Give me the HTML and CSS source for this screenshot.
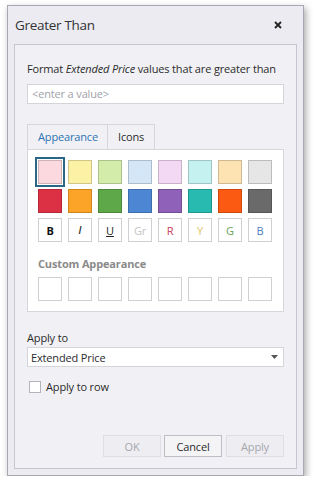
FILE: index.html
```html
<!DOCTYPE html>
<html lang="en">

<head>
    <meta charset="UTF-8">
    <meta name="viewport" content="width=device-width, initial-scale=1.0">
    <title>Greater Than</title>
    <link rel="stylesheet" href="styles.css">
</head>

<body>
    <div class="dialog">
        <div class="title-bar">
            <span class="title">Greater Than</span>
            <svg class="close" width="8" height="8" viewBox="0 0 8 8">
                <path d="M1 1 L7 7 M7 1 L1 7" stroke="#222" stroke-width="1.8" />
            </svg>
        </div>
        <div class="content">
            <p class="intro">Format <em>Extended Price</em> values that are greater than</p>
            <div class="input">&lt;enter a value&gt;</div>

            <div class="tabs">
                <div class="tab active">Appearance</div>
                <div class="tab">Icons</div>
            </div>
            <div class="tab-panel">
                <div class="swatches">
                    <div class="swatch selected" style="background:#fcd9df"></div>
                    <div class="swatch" style="background:#fdf1a6"></div>
                    <div class="swatch" style="background:#d4ecaa"></div>
                    <div class="swatch" style="background:#d3e7f9"></div>
                    <div class="swatch" style="background:#f3d9f4"></div>
                    <div class="swatch" style="background:#c5f1f1"></div>
                    <div class="swatch" style="background:#fde2b2"></div>
                    <div class="swatch" style="background:#e6e6e6"></div>

                    <div class="swatch" style="background:#dc3145"></div>
                    <div class="swatch" style="background:#fca428"></div>
                    <div class="swatch" style="background:#5ea84a"></div>
                    <div class="swatch" style="background:#4d87d3"></div>
                    <div class="swatch" style="background:#8f61b8"></div>
                    <div class="swatch" style="background:#28b9b1"></div>
                    <div class="swatch" style="background:#fb5a12"></div>
                    <div class="swatch" style="background:#6a6a6a"></div>

                    <div class="cell bold">B</div>
                    <div class="cell italic">I</div>
                    <div class="cell under">U</div>
                    <div class="cell grey">Gr</div>
                    <div class="cell red">R</div>
                    <div class="cell yellow">Y</div>
                    <div class="cell green">G</div>
                    <div class="cell blue">B</div>
                </div>

                <div class="custom-label">Custom Appearance</div>
                <div class="swatches">
                    <div class="cell"></div>
                    <div class="cell"></div>
                    <div class="cell"></div>
                    <div class="cell"></div>
                    <div class="cell"></div>
                    <div class="cell"></div>
                    <div class="cell"></div>
                    <div class="cell"></div>
                </div>
            </div>

            <div class="apply-label">Apply to</div>
            <div class="select">
                <span>Extended Price</span>
                <svg width="7" height="4" viewBox="0 0 7 4">
                    <path d="M0 0 H7 L3.5 4 Z" fill="#555" />
                </svg>
            </div>

            <label class="check-row">
                <span class="checkbox"></span>
                Apply to row
            </label>

            <div class="buttons">
                <button class="btn disabled">OK</button>
                <button class="btn">Cancel</button>
                <button class="btn disabled">Apply</button>
            </div>
        </div>
    </div>
</body>

</html>
```

FILE: styles.css
```css
:root {
    --window-bg: #ebebf1;
    --panel-bg: #f1f1f5;
    --border: #c6c6cf;
    --text-color: #2b2b2b;
    --font-family: 'Open Sans', 'Noto Sans', sans-serif;
}

body {
    margin: 0;
    padding: 0;
    background: #ffffff;
    font-family: var(--font-family);
    color: var(--text-color);
}

.dialog {
    box-sizing: border-box;
    margin: 5px 0 0 7px;
    width: 297px;
    height: 471px;
    border: 1px solid #a8a8b4;
    background: var(--window-bg);
    box-shadow: 2px 3px 7px rgba(0, 0, 0, 0.35);
    display: flex;
    flex-direction: column;
}

.title-bar {
    height: 38px;
    display: flex;
    align-items: center;
    justify-content: space-between;
    padding: 0 21px 0 7px;
    flex-shrink: 0;
}

.title {
    font-size: 13.5px;
    letter-spacing: -0.3px;
    color: #333;
    margin-top: -1px;
}

.close {
    margin-top: -1px;
}

.content {
    flex: 1;
    margin: 0 6px 6px 6px;
    border: 1px solid var(--border);
    background: var(--panel-bg);
    padding: 17px 12px 11px 12px;
    display: flex;
    flex-direction: column;
    font-size: 11px;
    letter-spacing: -0.15px;
}

.intro {
    margin: 0;
    line-height: 14px;
    white-space: nowrap;
}

.input {
    box-sizing: border-box;
    margin-top: 8px;
    height: 20px;
    border: 1px solid #d4d4da;
    background: #ffffff;
    color: #a2a2a8;
    padding: 0 4px;
    line-height: 18px;
}

.tabs {
    display: flex;
    margin-top: 20px;
    height: 25px;
}

.tab {
    box-sizing: border-box;
    border: 1px solid #d6d6dd;
    border-bottom: none;
    padding: 0 10px;
    line-height: 24px;
}

.tab + .tab {
    border-left: none;
}

.tab.active {
    width: 81px;
    color: #2c73b3;
    text-align: center;
}

.tab-panel {
    box-sizing: border-box;
    height: 163px;
    border: 1px solid #d6d6dd;
    background: #ffffff;
    padding: 10px 10px;
}

.swatches {
    display: grid;
    grid-template-columns: repeat(8, 24px);
    grid-auto-rows: 24px;
    column-gap: 6px;
    row-gap: 5px;
}

.swatch {
    box-sizing: border-box;
    border: 1px solid rgba(0, 0, 0, 0.18);
}

.swatch.selected {
    outline: 2px solid #2b6784;
    outline-offset: 1px;
}

.cell {
    box-sizing: border-box;
    border: 1px solid #cfcfd4;
    background: #ffffff;
    display: flex;
    align-items: center;
    justify-content: center;
    font-size: 11px;
}

.cell.bold {
    font-weight: bold;
    color: #111;
}

.cell.italic {
    font-style: italic;
    font-family: 'DejaVu Sans', sans-serif;
    color: #222;
}

.cell.under {
    text-decoration: underline;
    color: #222;
}

.cell.grey {
    color: #c4c4c4;
}

.cell.red {
    color: #c33b5a;
}

.cell.yellow {
    color: #e6c36b;
}

.cell.green {
    color: #66a35a;
}

.cell.blue {
    color: #4d7fbd;
}

.custom-label {
    margin: 15px 0 6px;
    line-height: 14px;
    font-weight: bold;
    color: #8a8a8a;
}

.apply-label {
    margin-top: 19px;
    line-height: 14px;
}

.select {
    box-sizing: border-box;
    margin-top: 2px;
    height: 20px;
    border: 1px solid #d4d4da;
    background: #ffffff;
    display: flex;
    align-items: center;
    justify-content: space-between;
    padding: 0 5px 0 3px;
}

.check-row {
    margin-top: 13px;
    display: flex;
    align-items: center;
    gap: 5px;
    line-height: 14px;
    padding-left: 2px;
}

.checkbox {
    box-sizing: border-box;
    width: 12px;
    height: 12px;
    border: 1px solid #b4b4bc;
    background: #ffffff;
}

.buttons {
    margin-top: auto;
    display: flex;
    justify-content: flex-end;
    gap: 3px;
}

.btn {
    box-sizing: border-box;
    width: 58px;
    height: 22px;
    border: 1px solid #bdbdc6;
    background: #f4f4f7;
    color: #2b2b2b;
    font-family: var(--font-family);
    font-size: 11px;
    letter-spacing: -0.15px;
    padding: 0;
}

.btn.disabled {
    border-color: #dedee4;
    background: #eeeef2;
    color: #a6a6ad;
}

.btn:last-child {
    margin-left: 1px;
}
```
